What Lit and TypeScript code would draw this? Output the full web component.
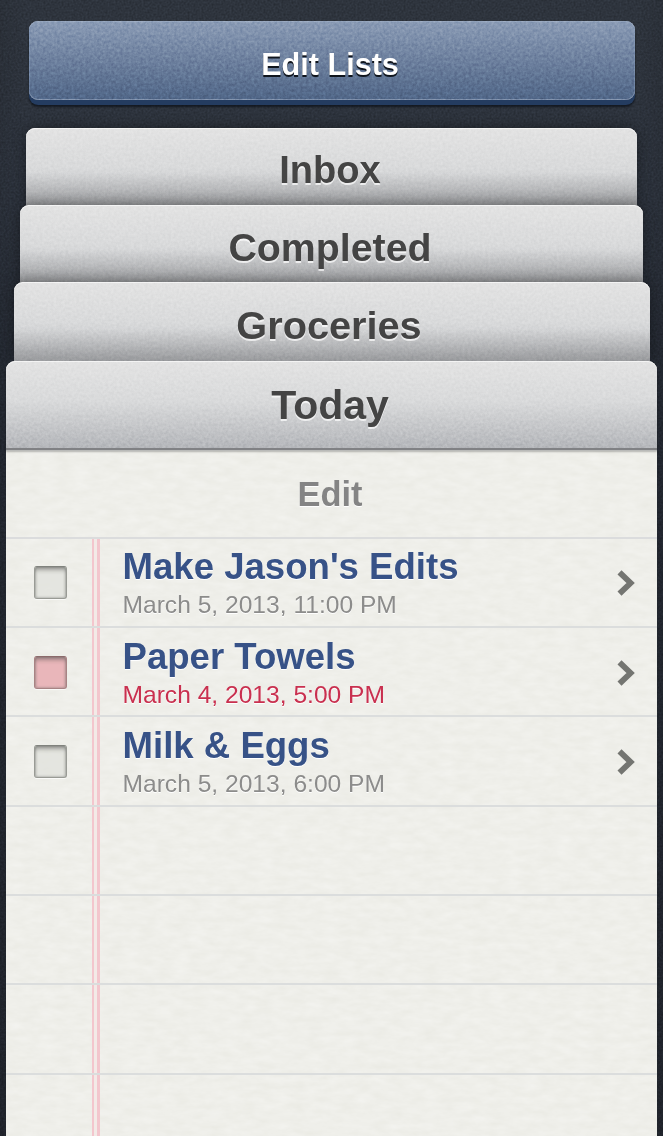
import { LitElement, html, css, svg } from "lit";
import { customElement, property } from "lit/decorators.js";

interface Task {
  title: string;
  due: string;
  overdue?: boolean;
}

const TASKS: Task[] = [
  { title: "Make Jason's Edits", due: "March 5, 2013, 11:00 PM" },
  { title: "Paper Towels", due: "March 4, 2013, 5:00 PM", overdue: true },
  { title: "Milk & Eggs", due: "March 5, 2013, 6:00 PM" },
];

const EMPTY_ROWS = [0, 1, 2, 3];

/* Procedural grain laid over a surface: light and dark specks around mid grey. */
@customElement("grain-layer")
export class GrainLayer extends LitElement {
  @property() frequency = "0.5";
  @property({ type: Number }) strength = 0.2;
  @property({ type: Number }) seed = 1;

  static styles = css`
    :host {
      position: absolute;
      inset: 0;
      overflow: hidden;
      border-radius: inherit;
      pointer-events: none;
      mix-blend-mode: overlay;
    }
    svg {
      display: block;
      width: 100%;
      height: 100%;
    }
  `;

  render() {
    const s = this.strength;
    const o = 0.5 - s / 2;
    const matrix = `${s} 0 0 0 ${o}  ${s} 0 0 0 ${o}  ${s} 0 0 0 ${o}  0 0 0 0 1`;
    return html`<svg aria-hidden="true">
      ${svg`<filter id="grain" x="0" y="0" width="100%" height="100%" color-interpolation-filters="sRGB">
        <feTurbulence type="fractalNoise" baseFrequency=${this.frequency} numOctaves="3" seed=${this.seed} />
        <feColorMatrix type="matrix" values=${matrix} />
      </filter>
      <rect width="100%" height="100%" filter="url(#grain)" />`}
    </svg>`;
  }
}

@customElement("task-row")
export class TaskRow extends LitElement {
  @property({ attribute: false }) task!: Task;

  static styles = css`
    :host {
      display: grid;
      grid-template-columns: 117px 1fr 51px;
      height: 100%;
      align-items: center;
    }
    .check {
      width: 33px;
      height: 33px;
      margin: 1px 0 0 27.5px;
      box-sizing: border-box;
      border-radius: 3px;
      background: rgba(224, 226, 220, 0.75);
      border: 1px solid #999b95;
      border-top-color: #80827d;
      box-shadow: inset 0 4px 4px -1px rgba(70, 72, 68, 0.45),
        inset 0 0 2px 1px rgba(90, 92, 88, 0.3), 0 1px 0 rgba(255, 255, 255, 0.7);
    }
    .check.overdue {
      background: #e9b6ba;
      border-color: #a88384;
      border-top-color: #8b6a6b;
    }
    .title {
      font-size: 36.6px;
      line-height: 42px;
      font-weight: 700;
      color: #375287;
      text-shadow: 0 1px 0 #fff;
      white-space: nowrap;
      padding-top: 2px;
    }
    .due {
      font-size: 24.6px;
      line-height: 28px;
      padding-top: 3px;
      color: #8c8c8b;
      text-shadow: 0 1px 0 #fff;
      white-space: nowrap;
    }
    .due.overdue {
      color: #c9304f;
    }
    .text {
      padding-bottom: 1px;
      margin-left: -0.5px;
    }
    svg {
      display: block;
      margin: 2px 0 0 10px;
    }
  `;

  render() {
    const late = this.task.overdue ? "overdue" : "";
    return html`
      <div class="check ${late}"></div>
      <div class="text">
        <div class="title">${this.task.title}</div>
        <div class="due ${late}">${this.task.due}</div>
      </div>
      <svg width="22" height="28" viewBox="0 0 22 28">
        <path d="M3.5 3.4 L14.6 14 L3.5 24.6" fill="none" stroke="#747571" stroke-width="5.8" stroke-linejoin="miter" />
      </svg>
    `;
  }
}

@customElement("app-root")
export class AppRoot extends LitElement {
  static styles = css`
    :host {
      display: block;
      height: 1136px;
      overflow: hidden;
      font-family: "Liberation Sans", Arial, Helvetica, sans-serif;
    }
    .screen {
      position: relative;
      height: 1136px;
      overflow: hidden;
      box-sizing: border-box;
      padding-top: 21px;
      display: flex;
      flex-direction: column;
      align-items: center;
      background: linear-gradient(90deg, rgba(0, 0, 0, 0.08), transparent 4% 96%, rgba(0, 0, 0, 0.08)),
        linear-gradient(#2e343d 0, #2c323c 200px, #242932 400px, #22262e 100%);
    }
    .edit-lists {
      position: relative;
      isolation: isolate;
      width: 606px;
      height: 78.5px;
      margin-bottom: 28.5px;
      border: 0;
      padding: 7px 3px 0 0;
      box-sizing: border-box;
      border-radius: 9px;
      background: linear-gradient(#8a9bb5, #6d809e 50%, #506687);
      box-shadow: inset 0 1px 0 #96a6be, inset 0 -1px 0 #8091ac,
        inset 1px 0 0 rgba(140, 160, 190, 0.4), inset -1px 0 0 rgba(140, 160, 190, 0.4),
        0 5px 0 #243c60, 0 7px 2px rgba(10, 14, 22, 0.7);
      color: #fff;
      font: 700 30.6px/72px "Liberation Sans", Arial, sans-serif;
      text-align: center;
      text-shadow: 0 2px 0 #10151d;
    }
    .tab {
      position: relative;
      isolation: isolate;
      flex: none;
      box-sizing: border-box;
      padding-right: 3px;
      border-radius: 9px 9px 0 0;
      text-align: center;
      font-weight: 700;
      color: #444;
      text-shadow: 0 2px 0 rgba(255, 255, 255, 0.7);
      background: linear-gradient(#e3e3e3, #d9dadb 40px, #b4b6ba 88px);
      box-shadow: inset 0 1px 0 #f4f4f4, 0 0 14px rgba(0, 0, 0, 0.4);
    }
    .label {
      position: relative;
      display: block;
    }
    .shade {
      position: absolute;
      inset: auto 0 0;
      height: 32px;
      background: linear-gradient(transparent, rgba(40, 40, 40, 0.1) 50%, rgba(30, 30, 30, 0.22));
    }
    .inbox {
      width: 611px;
      height: 76.5px;
      font-size: 38.1px;
      line-height: 84px;
    }
    .completed {
      width: 623px;
      height: 77.5px;
      font-size: 39.3px;
      line-height: 84px;
    }
    .groceries {
      width: 636px;
      height: 79px;
      padding-right: 5px;
      font-size: 39.7px;
      line-height: 86px;
    }
    .today {
      width: 651px;
      height: 89px;
      font-size: 41px;
      line-height: 88px;
      border-bottom: 2px solid #808184;
      z-index: 1;
      box-shadow: inset 0 1px 0 #f4f4f4, 0 1px 0 #b9bab8, 0 2px 2px rgba(0, 0, 0, 0.25);
    }
    .paper {
      position: relative;
      isolation: isolate;
      flex: 1;
      width: 651px;
      background: #efefea;
      display: flex;
      flex-direction: column;
    }
    .edit {
      position: relative;
      height: 88.5px;
      flex: none;
      box-sizing: border-box;
      border-bottom: 2.5px solid #dbdcdd;
      text-align: center;
      font-size: 34.4px;
      line-height: 88px;
      font-weight: 700;
      color: #848484;
      text-shadow: 0 1px 0 #fff;
    }
    .edit span {
      margin-left: -3px;
    }
    .rows {
      position: relative;
      flex: 1;
      background: linear-gradient(90deg, transparent 86px, #f3c6cd 86px 88.5px, #f3eae7 88.5px 91.5px, #f3c6cd 91.5px 94px, transparent 94px);
    }
    .row {
      height: 89.4px;
      box-sizing: border-box;
      border-bottom: 2px solid #dbdddd;
    }
  `;

  private tab(name: string, cls: string, seed: number, covered = true) {
    return html`<div class="tab ${cls}">
      <grain-layer frequency="0.35" .strength=${0.22} .seed=${seed}></grain-layer>
      ${covered ? html`<div class="shade"></div>` : null}
      <span class="label">${name}</span>
    </div>`;
  }

  render() {
    return html`
      <div class="screen">
        <grain-layer frequency="0.5" .strength=${0.25} .seed=${9}></grain-layer>
        <button class="edit-lists">
          <grain-layer frequency="0.35" .strength=${0.2} .seed=${4}></grain-layer>
          <span class="label">Edit Lists</span>
        </button>
        ${this.tab("Inbox", "inbox", 2)} ${this.tab("Completed", "completed", 3)}
        ${this.tab("Groceries", "groceries", 5)} ${this.tab("Today", "today", 7, false)}
        <div class="paper">
          <grain-layer frequency="0.06 0.15" .strength=${0.3} .seed=${6}></grain-layer>
          <div class="edit"><span>Edit</span></div>
          <div class="rows">
            ${TASKS.map((t) => html`<div class="row"><task-row .task=${t}></task-row></div>`)}
            ${EMPTY_ROWS.map(() => html`<div class="row"></div>`)}
          </div>
        </div>
      </div>
    `;
  }
}
